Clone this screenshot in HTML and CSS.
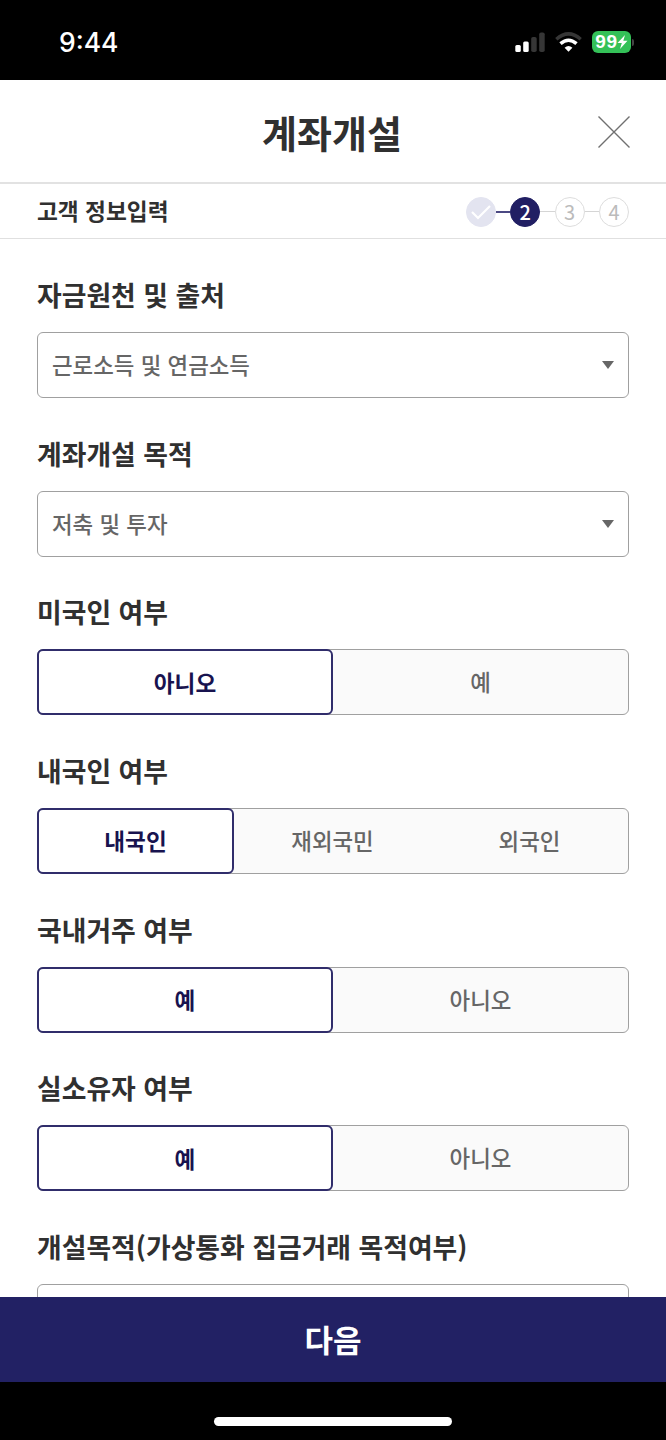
FILE: index.html
```html
<!DOCTYPE html>
<html lang="ko">
<head>
<meta charset="utf-8">
<title>계좌개설</title>
<link rel="stylesheet" href="styles.css">
</head>
<body>
<div class="screen">
  <div class="status">
    <span class="time">9:44</span>
    <div class="indicators">
      <svg class="signal" width="30" height="20" viewBox="0 0 30 20"><rect x="0.3" y="13" width="5.5" height="7" rx="1.5" fill="#fff"/><rect x="8.2" y="9.5" width="5.5" height="10.5" rx="1.5" fill="#fff"/><rect x="16.2" y="5" width="5.5" height="15" rx="1.8" fill="#363636"/><rect x="24.2" y="0.5" width="5.5" height="19.5" rx="1.8" fill="#363636"/></svg>
      <svg class="wifi" width="27" height="20" viewBox="0 0 27 20" fill="none" stroke-width="3.5"><path d="M1.3 7.2Q13.5-3.4 25.7 7.2" stroke="#363636"/><path d="M5.5 11.7Q13.5 4.8 21.5 11.7" stroke="#fff"/><path d="M13.5 19.7L9.6 15.7Q13.5 12.5 17.4 15.7Z" fill="#fff"/></svg>
      <div class="battery"><span>99</span><svg width="11" height="14" viewBox="0 0 11 14"><path d="M8 0L0.5 8h4.3L3 14l7.5-8.2H6.3z" fill="#fff"/></svg></div>
      <i class="battery-tip"></i>
    </div>
  </div>
  <header class="header">
    <h1>계좌개설</h1>
    <svg class="close" width="32" height="32" viewBox="0 0 32 32"><path d="M0.5 0.5L31.5 31.5M31.5 0.5L0.5 31.5" stroke="#707070" stroke-width="1.4"/></svg>
  </header>
  <div class="progress">
    <strong>고객 정보입력</strong>
    <div class="steps">
      <span class="step done"><svg width="22" height="16" viewBox="0 0 22 16"><path d="M2 8l6 6L20 2" fill="none" stroke="#fff" stroke-width="2.2"/></svg></span><i class="link dark"></i>
      <span class="step current">2</span><i class="link"></i>
      <span class="step">3</span><i class="link"></i>
      <span class="step">4</span>
    </div>
  </div>
  <main class="form">
    <section><h2>자금원천 및 출처</h2><div class="select"><span>근로소득 및 연금소득</span><i class="arrow"></i></div></section>
    <section><h2>계좌개설 목적</h2><div class="select"><span>저축 및 투자</span><i class="arrow"></i></div></section>
    <section><h2>미국인 여부</h2><div class="choices"><b>아니오</b><span>예</span></div></section>
    <section><h2>내국인 여부</h2><div class="choices three"><b>내국인</b><span>재외국민</span><span>외국인</span></div></section>
    <section><h2>국내거주 여부</h2><div class="choices"><b>예</b><span>아니오</span></div></section>
    <section><h2>실소유자 여부</h2><div class="choices"><b>예</b><span>아니오</span></div></section>
    <section><h2>개설목적(가상통화 집금거래 목적여부)</h2><div class="select"></div></section>
  </main>
  <div class="next">다음</div>
  <div class="home"><i></i></div>
</div>
</body>
</html>
```
FILE: styles.css
```css
* { box-sizing: border-box; }
body { margin: 0; background: #fff; font-family: "Noto Sans CJK KR", sans-serif; color: #303030; }
.screen { width: 666px; height: 1440px; display: flex; flex-direction: column; overflow: hidden; }
.status { flex: none; height: 80px; background: #000; color: #fff; display: flex; justify-content: space-between; padding: 0 32px 0 59px; }
.time { font: 500 26.5px/85px Inter, sans-serif; }
.indicators { display: flex; align-items: center; height: 84px; }
.wifi { margin: 0 10px 0 10px; }
.battery { width: 39px; height: 22px; border-radius: 6px; background: #34c158; display: flex; align-items: center; justify-content: center; font: 700 19px/22px "Liberation Sans", sans-serif; letter-spacing: 0.8px; }
.battery span { margin-right: -1px; }
.battery-tip { width: 2px; height: 7px; margin-left: 1px; border-radius: 0 2px 2px 0; background: #444; }
.header { flex: none; height: 104px; border-bottom: 2px solid #e2e2e2; display: grid; grid-template-columns: 1fr auto 1fr; align-items: center; padding: 0 37px 0 35px; }
h1 { grid-column: 2; margin: 0; font-size: 38px; line-height: 50px; font-weight: 700; padding-top: 1px; }
.close { justify-self: end; margin: 1px -1px 0 0; }
.progress { flex: none; height: 55px; border-bottom: 1px solid #e0e0e0; display: flex; align-items: center; justify-content: space-between; padding: 0 37px; font-size: 22.7px; }
.progress strong { line-height: 30px; }
.steps { display: flex; align-items: center; padding-top: 1px; }
.step { width: 30px; height: 30px; border: 1px solid #ddd; border-radius: 50%; display: flex; align-items: center; justify-content: center; color: #bbb; font-size: 20px; line-height: 28px; }
.done { background: #e3e4f0; border-color: #e3e4f0; }
.current { background: #211f63; border-color: #211f63; color: #fff; font-weight: 500; }
.link { width: 14.4px; height: 1px; background: #d5d5d5; }
.dark { height: 2px; background: #4b4983; }
.form { flex: 1; min-height: 0; overflow: hidden; padding: 36px 37px 0; }
section { height: 158.65px; }
h2 { margin: 0; height: 57px; font-size: 26.85px; line-height: 39px; font-weight: 700; white-space: nowrap; }
.select, .choices { height: 66px; border: 1px solid #a0a0a0; border-radius: 6px; font-size: 22.4px; font-weight: 500; color: #666; }
.select { display: flex; align-items: center; justify-content: space-between; padding: 0 14px; }
.select span { padding-bottom: 2px; }
.arrow { border: 6px solid transparent; border-top: 8px solid #666; border-bottom: 0; }
.choices { background: #fafafa; display: grid; grid-template-columns: 1fr 1fr; }
.three { grid-template-columns: 196px 1fr 1fr; }
.choices > * { display: flex; align-items: center; justify-content: center; padding-bottom: 2px; }
.choices b { margin: -1px 0 -1px -1px; border: 2px solid #302d6b; border-radius: 6px; background: #fff; color: #18134f; font-weight: 700; font-size: 22.6px; padding-bottom: 0; }
.next { flex: none; height: 85px; background: #222164; color: #fff; font-size: 31px; line-height: 84px; font-weight: 700; text-align: center; }
.home { flex: none; height: 58px; background: #000; display: flex; justify-content: center; padding-top: 35px; }
.home i { width: 238px; height: 9px; border-radius: 5px; background: #fff; }
```
